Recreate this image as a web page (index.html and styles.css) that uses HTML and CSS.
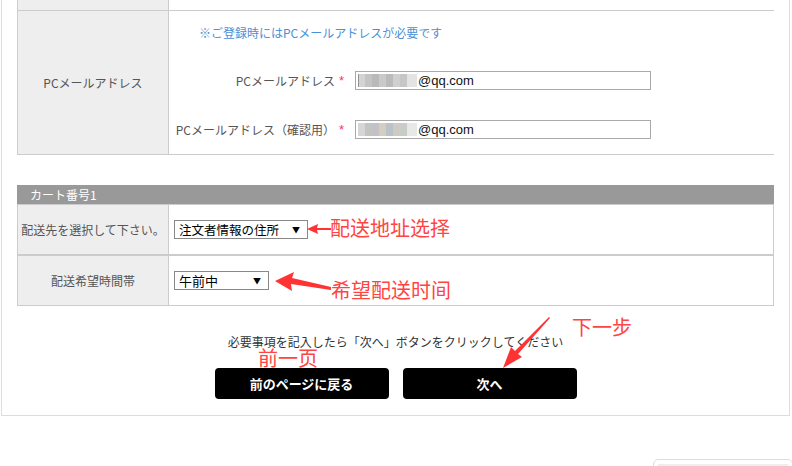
FILE: index.html
```html
<!DOCTYPE html>
<html>
	<head>
		<meta charset="utf-8" />
		<title>ご注文情報</title>
		<link rel="stylesheet" href="styles.css">
	</head>
	<body>
		<div class="container">
			<div class="mailTable">
				<div class="row topRow">
					<div class="label"></div>
					<div class="value"></div>
				</div>
				<div class="row">
					<div class="label">PCメールアドレス</div>
					<div class="value mailValue">
						<p class="notice">※ご登録時にはPCメールアドレスが必要です</p>
						<div class="field">
							<span class="fieldName">PCメールアドレス</span>
							<span class="req">*</span>
							<div class="textBox"><span class="mosaic"></span>@qq.com</div>
						</div>
						<div class="field">
							<span class="fieldName">PCメールアドレス（確認用）</span>
							<span class="req">*</span>
							<div class="textBox"><span class="mosaic second"></span>@qq.com</div>
						</div>
					</div>
				</div>
			</div>

			<div class="cartTable">
				<div class="cartHead">カート番号1</div>
				<div class="row">
					<div class="label">配送先を選択して下さい。</div>
					<div class="value">
						<div class="selectBox wide"><span>注文者情報の住所</span><i>▼</i></div>
					</div>
				</div>
				<div class="row">
					<div class="label">配送希望時間帯</div>
					<div class="value">
						<div class="selectBox"><span>午前中</span><i>▼</i></div>
					</div>
				</div>
			</div>

			<p class="hint">必要事項を記入したら「次へ」ボタンをクリックしてください</p>
			<div class="buttons">
				<button type="button" class="btn">前のページに戻る</button>
				<button type="button" class="btn">次へ</button>
			</div>

			<!-- 注释层 -->
			<div class="notes">
				<svg class="arrows" width="792" height="466" viewBox="0 0 792 466">
					<polygon points="307,229 318,224 317,228 331,228 331,230 317,230 318,234" />
					<polygon points="275,281 294,272 292,278 331,287 331,290 291,284 292,291" />
					<polygon points="503,368 511,347 515,351 549,317 550,318 518,354 522,357" />
				</svg>
				<span class="note n1">配送地址选择</span>
				<span class="note n2">希望配送时间</span>
				<span class="note n3">前一页</span>
				<span class="note n4">下一步</span>
			</div>
		</div>
		<div class="sideBox"><div class="sideBar"></div></div>
	</body>
</html>
```

FILE: styles.css
```css
*,
*::before,
*::after{
	box-sizing: border-box;
}
body{
	margin: 0;
	font-family: "Noto Sans CJK JP", "Liberation Sans", sans-serif;
	font-size: 12px;
	color: #555;
	background: #fff;
	overflow: hidden;
}
.container{
	width: 789px;
	margin-left: 1px;
	padding: 0 15px 16px 15px;
	border: 1px solid #ddd;
	border-top: none;
}
.row{
	display: grid;
	grid-template-columns: 151px 1fr;
}
.label{
	background: #eee;
	border-right: 1px solid #ccc;
	display: flex;
	align-items: center;
	justify-content: center;
	text-align: center;
}
.value{
	display: flex;
	align-items: center;
	padding-left: 5px;
}

/* mail table */
.mailTable{
	border-left: 1px solid #ccc;
}
.mailTable .row{
	border-bottom: 1px solid #ccc;
}
.mailTable .topRow{
	height: 11px;
}
.mailValue{
	display: block;
	padding: 12px 0 15px 0;
}
.notice{
	margin: 0 0 28px 30px;
	line-height: 20px;
	color: #4b8fd6;
}
.field{
	display: flex;
	align-items: center;
	height: 19px;
}
.field + .field{
	margin-top: 30px;
}
.fieldName{
	width: 166px;
	text-align: right;
}
.req{
	width: 20px;
	padding-left: 4px;
	color: #f36;
	font-family: "Liberation Sans", sans-serif;
	font-size: 13px;
}
.textBox{
	width: 296px;
	height: 19px;
	border: 1px solid #a9a9a9;
	display: flex;
	align-items: center;
	padding-left: 2px;
	font-family: "Liberation Sans", sans-serif;
	font-size: 13px;
	color: #111;
}
.mosaic{
	display: inline-block;
	width: 59px;
	height: 13px;
	margin-right: 1px;
	background: linear-gradient(90deg, #777 0 1px, #c9c9c9 1px 7px, #b5b5b5 7px 14px, #a8a8a8 14px 21px, #bdbdbd 21px 28px, #aaa 28px 35px, #c4c4c4 35px 42px, #b8b8b8 42px 49px, #dcdcdc 49px 59px);
	opacity: .8;
}
.mosaic.second{
	background: linear-gradient(90deg, #ccc 0 7px, #b0b8b0 7px 14px, #b7b0ba 14px 21px, #c7c2b0 21px 28px, #aab2bb 28px 35px, #c2bdb8 35px 42px, #b9c0b9 42px 49px, #e2e2e2 49px 59px);
}

/* cart table */
.cartTable{
	margin-top: 30px;
}
.cartHead{
	height: 19px;
	line-height: 19px;
	background: #999;
	color: #fff;
	padding-left: 13px;
}
.cartTable .row{
	border: 1px solid #ccc;
	height: 51px;
}
.selectBox{
	display: flex;
	align-items: center;
	justify-content: space-between;
	width: 95px;
	height: 19px;
	border: 1px solid #888;
	padding: 0 7px 0 4px;
	font-size: 13px;
	color: #000;
}
.selectBox.wide{
	width: 134px;
	font-size: 12.5px;
}
.selectBox i{
	font-style: normal;
	font-size: 8px;
}

/* bottom */
.hint{
	margin: 28px 0 0 0;
	line-height: 16px;
	text-align: center;
	color: #333;
}
.buttons{
	display: flex;
	justify-content: center;
	gap: 14px;
	margin-top: 18px;
}
.btn{
	width: 174px;
	height: 31px;
	border: none;
	border-radius: 4px;
	background: #000;
	color: #fff;
	font-family: "Noto Sans CJK JP", sans-serif;
	font-size: 13px;
	font-weight: bold;
	cursor: pointer;
}

/* annotations */
.notes{
	position: absolute;
	top: 0;
	left: 0;
	width: 792px;
	height: 466px;
	pointer-events: none;
}
.arrows{
	position: absolute;
	top: 0;
	left: 0;
}
.arrows polygon{
	fill: #f33;
}
.note{
	position: absolute;
	font-family: "Noto Sans CJK SC", sans-serif;
	font-size: 20px;
	line-height: 24px;
	color: #f44;
}
.n1{ left: 330px; top: 216px; }
.n2{ left: 331px; top: 278px; }
.n3{ left: 258px; top: 346px; }
.n4{ left: 572px; top: 315px; }

.sideBox{
	width: 140px;
	height: 20px;
	margin: 43px 0 0 653px;
	border: 1px solid #ddd;
	border-radius: 5px;
	padding: 4px 4px 0 4px;
}
.sideBar{
	height: 12px;
	background: #eee;
}
```
